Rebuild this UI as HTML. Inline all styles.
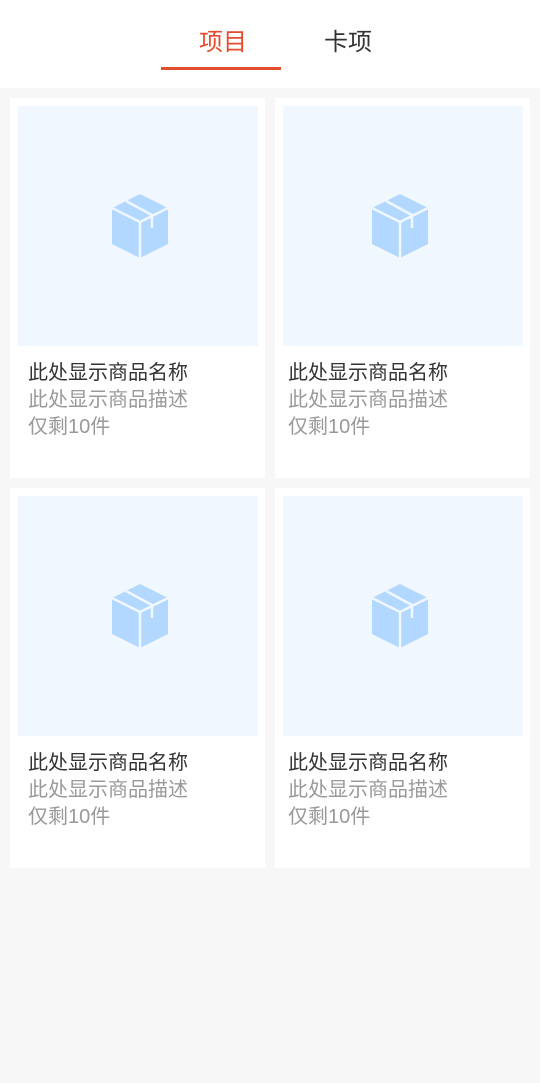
<!DOCTYPE html>
<html><head><meta charset="utf-8"><style>
*{margin:0;padding:0;box-sizing:border-box}
body{width:540px;height:1083px;background:#f7f7f7;font-family:"Liberation Sans","Noto Sans CJK SC",sans-serif;position:relative;overflow:hidden}
.hd{position:absolute;left:0;top:0;width:540px;height:88px;background:#fff}
.tab{position:absolute;top:27px;font-size:24px;line-height:32px;width:120px;text-align:center}
.ul{position:absolute;left:161px;top:67px;width:120px;height:3px;background:#e44d2e}
.card{position:absolute;width:255px;height:380px;background:#fff}
.img{position:absolute;left:8px;top:8px;width:240px;height:240px;background:#f0f7ff}
.img svg{position:absolute;top:86px}
.t{position:absolute;font-size:20px;line-height:27px;white-space:nowrap}
</style></head><body>
<div class="hd">
<div class="tab" style="left:163px;color:#e44d2e">项目</div>
<div class="tab" style="left:288px;color:#333">卡项</div>
<div class="ul"></div>
</div>
<div id="c"></div>
<script>
var pos=[[10,98,92,18],[275,98,87,13],[10,488,92,18],[275,488,87,13]],h='';
pos.forEach(function(p){h+='<div class="card" style="left:'+p[0]+'px;top:'+p[1]+'px"><div class="img"><svg style="left:'+p[2]+'px" width="60" height="68" viewBox="0 0 60 68"><polygon points="2,16 30,2 58,16 58,52 30,66 2,52" fill="#b3d8ff"/><polyline points="2,16 30,30 58,16" fill="none" stroke="#f0f7ff" stroke-width="2.5"/><line x1="30" y1="30" x2="30" y2="66" stroke="#f0f7ff" stroke-width="2.5"/><polyline points="16,9 42,23 42,36" fill="none" stroke="#f0f7ff" stroke-width="2.5"/></svg></div><div class="t" style="left:'+p[3]+'px;top:262px;color:#333">此处显示商品名称</div><div class="t" style="left:'+p[3]+'px;top:289px;color:#999">此处显示商品描述</div><div class="t" style="left:'+p[3]+'px;top:316px;color:#999">仅剩10件</div></div>';});
document.getElementById('c').innerHTML=h;
</script>
</body></html>
